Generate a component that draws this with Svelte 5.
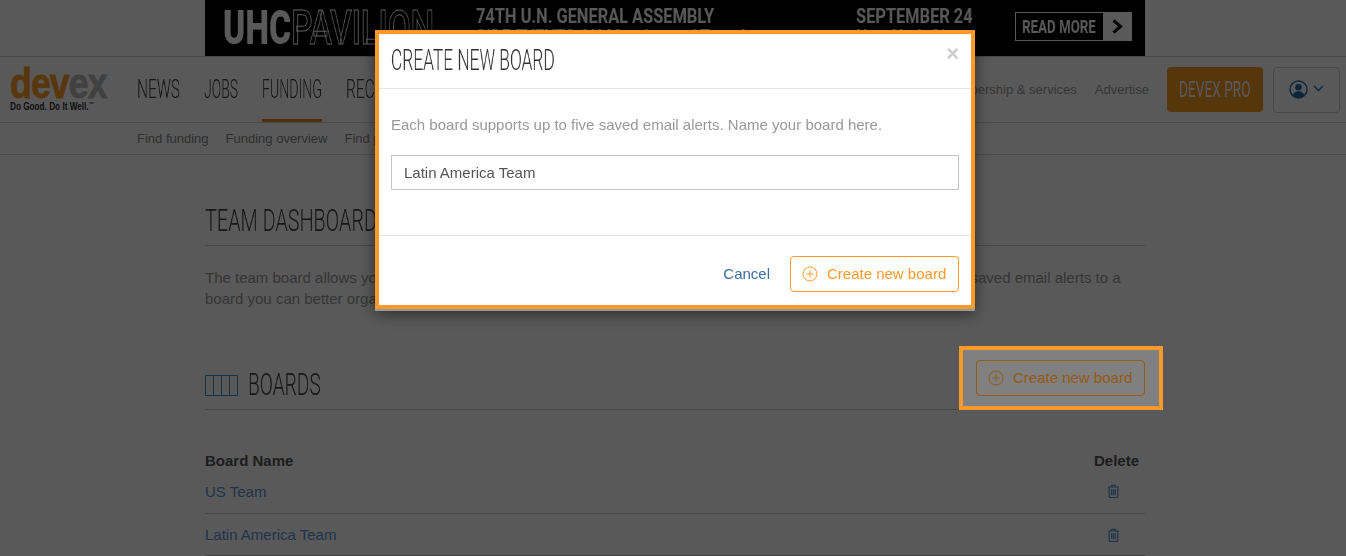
<script>
  const navLeft = [
    { label: 'NEWS', cls: 'w43' },
    { label: 'JOBS', cls: 'w34' },
    { label: 'FUNDING', cls: 'w60 active' },
    { label: 'RECRUITING', cls: 'w90' }
  ];
  const sub = ['Find funding', 'Funding overview', 'Find programs'];
  const boards = ['US Team', 'Latin America Team'];
</script>

<div class="page">
  <div class="bannerwrap">
    <div class="banner">
      <div class="bn-logo"><span class="sq uhc"><b>UHC</b><i>PAVILION</i></span></div>
      <div class="bn-mid">
        <span class="sq l1">74TH U.N. GENERAL ASSEMBLY</span>
        <span class="sq l1">SIDE EVENTS ON Monday and Tuesday</span>
      </div>
      <div class="bn-date">
        <span class="sq l1">SEPTEMBER 24</span>
        <span class="sq l1">New York City</span>
      </div>
      <div class="readmore">
        <span class="rm-text"><span class="sq rm">READ MORE</span></span>
        <span class="rm-arrow">
          <svg width="13" height="15" viewBox="0 0 13 15"><path d="M2.500 1.500 9.500 7.500 2.500 13.500" fill="none" stroke="#000" stroke-width="3"/></svg>
        </span>
      </div>
    </div>
  </div>

  <header class="nav">
    <div class="logo">
      <div class="wordmark"><span class="dev">dev</span><span class="ex">ex</span></div>
      <div class="tag">Do Good. Do It Well.<sup>™</sup></div>
    </div>
    <nav class="mainnav">
      {#each navLeft as n}
        <a class="navitem {n.cls}"><span class="sq navtxt">{n.label}</span></a>
      {/each}
    </nav>
    <div class="navright">
      <a class="rlink">Membership &amp; services</a>
      <a class="rlink">Advertise</a>
      <a class="pro"><span class="sq protxt">DEVEX PRO</span></a>
      <button class="user" aria-label="Account">
        <svg width="19" height="19" viewBox="0 0 19 19">
          <circle cx="9.500" cy="9.500" r="8.500" fill="none" stroke="#2a6ea8" stroke-width="1.400"/>
          <circle cx="9.500" cy="7.200" r="3.300" fill="#2a6ea8"/>
          <path d="M3.600 15.400c1-3 3.200-4.200 5.900-4.200s4.900 1.200 5.900 4.200c-1.500 1.500-3.600 2.400-5.900 2.400s-4.400-.9-5.900-2.400z" fill="#2a6ea8"/>
        </svg>
        <svg width="11" height="7" viewBox="0 0 11 7"><path d="M1 1l4.500 4.500L10 1" fill="none" stroke="#2a6ea8" stroke-width="1.300"/></svg>
      </button>
    </div>
  </header>

  <div class="subnav">
    {#each sub as s}<a>{s}</a>{/each}
  </div>

  <main class="content">
    <h1 class="pagehead"><span class="sq h-lg team">TEAM DASHBOARD</span></h1>
    <p class="intro">The team board allows you and your colleagues to keep funding searches together in just one place. Add up to five saved email alerts to a<br />board you can better organize and share with everyone on your team.</p>

    <div class="boardshead">
      <div class="bh-left">
        <svg class="boardicon" width="33" height="21" viewBox="0 0 33 21">
          <path d="M.5.5h32v20H.5zM8.500.5v20M16.500.5v20M24.500.5v20" fill="none" stroke="#3c8fd0"/>
        </svg>
        <span class="sq h-lg">BOARDS</span>
      </div>
      <div class="highlight">
        <button class="outline dimmed">
          <svg width="16" height="16" viewBox="0 0 16 16"><circle cx="8" cy="8" r="7" fill="none" stroke="currentColor"/><path d="M8 4.500v7M4.500 8h7" stroke="currentColor"/></svg>
          <span class="btxt">Create new board</span>
        </button>
      </div>
    </div>

    <div class="thead"><span>Board Name</span><span>Delete</span></div>
    {#each boards as b}
      <div class="row">
        <a>{b}</a>
        <svg class="trash" width="13" height="14" viewBox="0 0 13 14">
          <path d="M1 3h11M4.500 3V1.300h4V3M2.200 3v9.600c0 .5.400.9.900.9h6.800c.5 0 .900-.4.900-.9V3M4.700 5.300v6M6.500 5.300v6M8.300 5.300v6" fill="none" stroke="#5d93d8" stroke-width="1.200"/>
        </svg>
      </div>
    {/each}
  </main>

  <div class="overlay">
    <div class="modal">
      <div class="m-head">
        <span class="sq h-md">CREATE NEW BOARD</span>
        <span class="close">×</span>
      </div>
      <div class="m-body">
        <p>Each board supports up to five saved email alerts. Name your board here.</p>
        <input type="text" value="Latin America Team" />
      </div>
      <div class="m-foot">
        <a class="cancel">Cancel</a>
        <button class="outline">
          <svg width="16" height="16" viewBox="0 0 16 16"><circle cx="8" cy="8" r="7" fill="none" stroke="currentColor"/><path d="M8 4.500v7M4.500 8h7" stroke="currentColor"/></svg>
          <span class="btxt">Create new board</span>
        </button>
      </div>
    </div>
  </div>
</div>

<style>
  :global(body) {
    margin: 0;
    background: #fff;
    font-family: "Liberation Sans", Arial, sans-serif;
    overflow: hidden;
  }
  .page { height: 556px; overflow: hidden; }

  .sq {
    display: inline-block;
    font-family: Roboto, "Liberation Sans", sans-serif;
    transform-origin: left center;
    white-space: nowrap;
    will-change: transform;
  }

  .bannerwrap { height: 56px; display: flex; justify-content: center; padding-left: 4px; border-bottom: 1px solid #c8c8c8; }
  .banner {
    width: 940px; height: 56px; background: #000; display: flex; color: #fff;
    box-sizing: border-box;
  }
  .bn-logo { width: 19px; margin-left: 18px; height: 56px; display: flex; align-items: center; }
  .uhc { font-size: 48px; line-height: 52px; transform: scaleX(.7); }
  .uhc b { font-weight: 900; color: #fff; }
  .uhc i { font-style: normal; font-weight: 500; color: #000; letter-spacing: -.5px; -webkit-text-stroke: 1px #fff; }
  .bn-mid { margin-left: 234px; width: 380px; padding-top: 6px; display: flex; flex-direction: column; }
  .l1 { font-size: 21px; line-height: 21px; font-weight: 700; transform: scaleX(.78); }
  .bn-date { width: 159px; padding-top: 6px; display: flex; flex-direction: column; }
  .readmore {
    margin-top: 12px; height: 29px; width: 117px; box-sizing: border-box; border: 1px solid #fff;
    display: flex;
  }
  .rm-text { width: 87px; display: flex; align-items: center; padding-left: 6px; box-sizing: border-box; }
  .rm { font-size: 18px; font-weight: 700; transform: scaleX(.74); }
  .rm-arrow { flex: 1; background: #fff; display: flex; align-items: center; justify-content: center; }

  .nav {
    height: 65px; border-bottom: 1px solid #d8d8d8; display: flex; align-items: stretch; padding: 0 6px 0 10px;
  }
  .logo { width: 127px; padding-top: 11px; box-sizing: border-box; }
  .wordmark {
    font-size: 43px; line-height: 31px; height: 31px; font-weight: 700; letter-spacing: -1.100px;
    -webkit-text-stroke: .9px currentColor;
    transform-origin: left top; transform: scaleX(.83);
    white-space: nowrap;
  }
  .dev { color: #ff9f2a; }
  .ex { color: #bbb; }
  .tag { font-size: 10px; line-height: 12px; font-weight: 700; color: #333; transform: scaleX(.82); transform-origin: left; white-space: nowrap; margin-top: 2px; }
  .tag sup { font-size: 6px; line-height: 0; }

  .mainnav { display: flex; gap: 24px; }
  .navitem { display: block; height: 65px; box-sizing: border-box; padding-top: 20px; }
  .navitem.w43 { width: 43px; }
  .navitem.w34 { width: 34px; }
  .navitem.w60 { width: 60px; border-bottom: 3px solid #e08a1e; }
  .navitem.w90 { width: 90px; }
  .navtxt { font-size: 25px; line-height: 26px; font-weight: 300; color: #444; transform: scaleX(.62); }
  .navitem.w34 .navtxt { transform: scaleX(.56); }
  .navitem.w60 .navtxt { transform: scaleX(.565); }

  .navright { margin-left: auto; display: flex; align-items: center; }
  .rlink { font-size: 13px; color: #999; margin-right: 18px; }
  .pro {
    width: 96px; height: 45px; background: #f59a20; border-radius: 4px; margin-right: 10px;
    box-sizing: border-box; padding-left: 12px; display: flex; align-items: center;
  }
  .protxt { font-size: 22px; font-weight: 400; color: #fff; transform: scaleX(.62); }
  .user {
    width: 67px; height: 46px; background: #fff; border: 1px solid #ccc; border-radius: 4px;
    display: flex; align-items: center; justify-content: center; gap: 5px; padding: 0;
  }
  .user svg:last-child { margin-bottom: 3px; }

  .subnav {
    height: 31px; border-bottom: 1px solid #d8d8d8; display: flex; gap: 17px; padding-left: 137px;
    align-items: center; font-size: 13px; color: #888;
  }

  .content { width: 940px; margin: 0 auto; padding-left: 4px; color: #888; }
  .pagehead {
    margin: 0; height: 91px; border-bottom: 1px solid #ccc; box-sizing: border-box;
    display: flex; align-items: flex-end; padding-bottom: 6px;
  }
  .h-lg { font-size: 31px; line-height: 36px; font-weight: 300; color: #444; transform: scaleX(.62); }
  .h-lg.team { transform: scaleX(.64); }
  .intro { margin: 21px 0 0; font-size: 15px; line-height: 21px; color: #999; white-space: nowrap; }
  .boardshead {
    margin-top: 37px; height: 64px; border-bottom: 1px solid #ccc; box-sizing: border-box;
    display: flex; justify-content: space-between; align-items: flex-end;
  }
  .bh-left { display: flex; align-items: center; gap: 10px; padding-bottom: 6px; }
  .highlight {
    position: relative; z-index: 20;
    width: 204px; height: 64px; box-sizing: border-box; margin-right: -18px; margin-bottom: -1px;
    border: 4px solid #ff9a2a; background: #808080;
    padding: 10px 0 0 13px;
  }

  .outline {
    width: 169px; height: 36px; box-sizing: border-box; background: transparent; border: 1px solid #ff9a2a;
    border-radius: 4px; color: #ff9a2a; font: 15px "Liberation Sans", Arial, sans-serif;
    display: flex; align-items: center; gap: 9px; padding: 0 0 0 12px;
  }
  .outline svg { margin-left: -1px; }
  .btxt { margin-bottom: 2px; }
  .outline.dimmed { border-color: #945a12; color: #945a12; }

  .thead {
    margin-top: 43px; display: flex; justify-content: space-between; font-size: 15px; font-weight: 700; color: #555;
    padding-right: 6px; line-height: 16px;
  }
  .row {
    height: 42px; box-sizing: border-box; border-bottom: 1px solid #ccc; display: flex; justify-content: space-between;
    align-items: center; font-size: 15px; color: #5d93d8; padding-right: 25px;
  }
  .thead + .row { height: 45px; }
  .trash { flex: none; }

  .overlay { position: fixed; inset: 0; background: rgba(0,0,0,.65); z-index: 10; }
  .modal {
    width: 600px; height: 279px; margin: 30px 0 0 375px; box-sizing: border-box; background: #fff;
    border: 4px solid #ff9a2a;
    box-shadow: 0 2px 0 #999, 0 5px 15px rgba(0,0,0,.5);
    display: flex; flex-direction: column;
  }
  .m-head {
    height: 55px; box-sizing: border-box; border-bottom: 1px solid #e5e5e5; padding: 8px 12px 0;
    display: flex; justify-content: space-between;
  }
  .h-md { font-size: 29px; line-height: 36px; font-weight: 300; color: #333; transform: scaleX(.598); }
  .close { font-size: 22px; line-height: 21px; font-weight: 700; color: #ccc; font-family: "Liberation Sans", sans-serif; margin: 1px 0 0 0; }
  .m-body { height: 147px; box-sizing: border-box; border-bottom: 1px solid #e5e5e5; padding: 26px 12px 0; }
  .m-body p { margin: 0 0 20px; font-size: 15px; line-height: 20px; color: #999; }
  .m-body input {
    display: block; width: 100%; height: 35px; box-sizing: border-box; border: 1px solid #c4c4c4; padding: 0 12px;
    font: 15px "Liberation Sans", Arial, sans-serif; color: #555; outline: none;
  }
  .m-foot { flex: 1; display: flex; justify-content: flex-end; align-items: center; gap: 20px; padding: 7px 12px 0; }
  .cancel { font-size: 15px; color: #3b6ea5; margin-bottom: 2px; }
</style>
